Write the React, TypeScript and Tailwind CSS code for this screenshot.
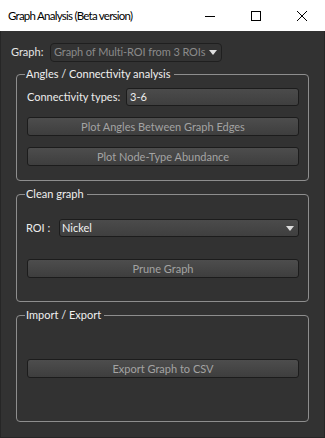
import React from "react";

const font = { fontFamily: 'Lato, "Liberation Sans", Arial, sans-serif' };

function Btn({ label }: { label: string }) {
  return (
    <div className="h-[19px] rounded-[3px] border border-[#1c1c1c] bg-gradient-to-b from-[#4d4d4d] to-[#3e3e3e] flex items-center justify-center text-[11px] text-[#a3a3a3] leading-none whitespace-nowrap">
      {label}
    </div>
  );
}

function Group({ title, children, cls }: { title: string; children: React.ReactNode; cls: string }) {
  return (
    <div className={"relative rounded-[4px] border border-[#8e8e8e] " + cls}>
      <div className="absolute -top-[8px] left-[8px] bg-[#323232] pr-[3px] pl-[1px] text-[11px] leading-[14px] text-[#f0f0f0] whitespace-nowrap">
        {title}
      </div>
      {children}
    </div>
  );
}

export default function App() {
  return (
    <div className="w-[325px] h-[438px] flex flex-col bg-[#323232] select-none" style={font}>
      <div className="h-[31px] bg-white flex items-center shrink-0">
        <div className="pl-[8px] text-[11.5px] tracking-[-0.75px] text-black flex-1 whitespace-nowrap">Graph Analysis (Beta version)</div>
        <div className="flex items-center h-full">
          <div className="w-[46px] h-full flex items-center justify-center">
            <svg width="10" height="10" viewBox="0 0 10 10"><path d="M0 5.5H10" stroke="#000" strokeWidth="1" /></svg>
          </div>
          <div className="w-[46px] h-full flex items-center justify-center">
            <svg width="10" height="10" viewBox="0 0 10 10"><rect x="0.5" y="0.5" width="9" height="9" fill="none" stroke="#000" strokeWidth="1" /></svg>
          </div>
          <div className="w-[46px] h-full flex items-center justify-center">
            <svg width="10" height="10" viewBox="0 0 10 10"><path d="M0 0L10 10M10 0L0 10" stroke="#000" strokeWidth="1" /></svg>
          </div>
        </div>
      </div>
      <div className="flex-1 flex flex-col border-x border-b border-[#262626] px-[15px]">
        <div className="flex items-center mt-[12px] -ml-[5px] h-[19px]">
          <span className="w-[39px] shrink-0 text-[11px] text-[#e6e6e6]">Graph:</span>
          <div className="w-[172px] h-[19px] rounded-[4px] border border-[#1f1f1f] bg-[#333333] flex items-center pl-[3px] pr-[4px] text-[11px] text-[#8a8a8a] whitespace-nowrap">
            <span className="flex-1 tracking-[-0.1px]">Graph of Multi-ROI from 3 ROIs</span>
            <svg width="8" height="5" viewBox="0 0 8 5"><path d="M0 0H8L4 5Z" fill="#e0e0e0" /></svg>
          </div>
        </div>

        <Group title="Angles / Connectivity analysis" cls="mt-[12px] pt-[13px] pb-[14px] pl-[10px] pr-[9px]">
          <div className="flex items-center h-[18px]">
            <span className="w-[99px] shrink-0 text-[11px] text-[#ececec] whitespace-nowrap">Connectivity types:</span>
            <div className="flex-1 h-[18px] rounded-[3px] border border-[#1c1c1c] bg-gradient-to-b from-[#4b4b4b] to-[#3f3f3f] flex items-center px-[3px] text-[11px] text-[#eeeeee]">3-6</div>
          </div>
          <div className="mt-[11px]"><Btn label="Plot Angles Between Graph Edges" /></div>
          <div className="mt-[11px]"><Btn label="Plot Node-Type Abundance" /></div>
        </Group>

        <Group title="Clean graph" cls="mt-[13px] pt-[24px] pb-[23px] pl-[10px] pr-[9px]">
          <div className="flex items-center h-[18px] -ml-[1px]">
            <span className="w-[33px] shrink-0 text-[11px] text-[#ececec]">ROI :</span>
            <div className="flex-1 h-[18px] rounded-[3px] border border-[#1c1c1c] bg-gradient-to-b from-[#4b4b4b] to-[#3f3f3f] flex items-center pl-[2px] pr-[4px] text-[11px] text-[#f2f2f2]">
              <span className="flex-1">Nickel</span>
              <svg width="8" height="5" viewBox="0 0 8 5"><path d="M0 0H8L4 5Z" fill="#dcdcdc" /></svg>
            </div>
          </div>
          <div className="mt-[22px]"><Btn label="Prune Graph" /></div>
        </Group>

        <Group title="Import / Export" cls="mt-[13px] pt-[43px] pb-[43px] pl-[10px] pr-[9px]">
          <Btn label="Export Graph to CSV" />
        </Group>
      </div>
    </div>
  );
}
